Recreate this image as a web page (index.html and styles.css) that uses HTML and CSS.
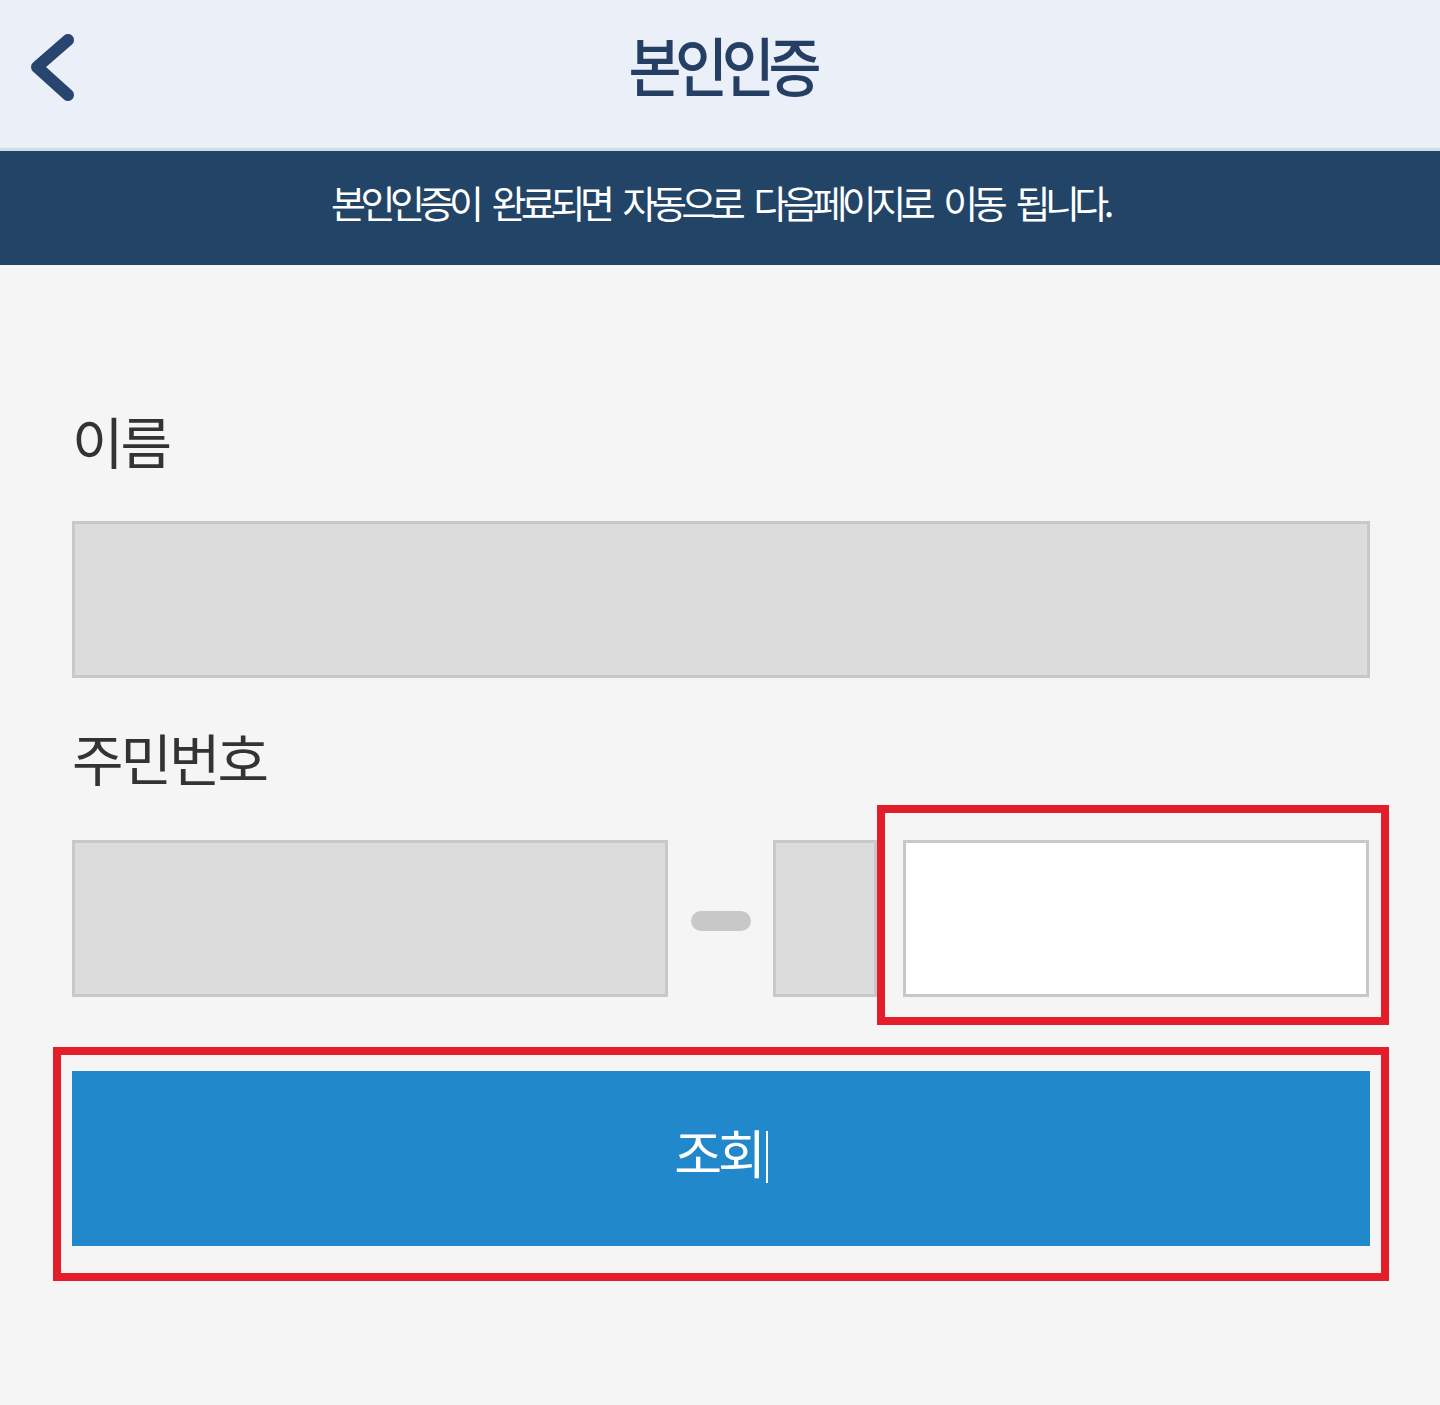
FILE: index.html
```html
<!DOCTYPE html>
<html lang="ko">
<head>
<meta charset="utf-8">
<title>본인인증</title>
<link rel="stylesheet" href="styles.css">
</head>
<body>
<header class="topbar">
  <svg class="back" width="100" height="148" viewBox="0 0 100 148" aria-hidden="true">
    <path d="M68 40 L37 67 L68 95" fill="none" stroke="#284570" stroke-width="12" stroke-linecap="round" stroke-linejoin="round"/>
  </svg>
  <h1 class="title">본인인증</h1>
</header>
<div class="banner"><span class="banner-text">본인인증이 완료되면 자동으로 다음페이지로 이동 됩니다.</span></div>
<main class="main">
  <div class="label">이름</div>
  <div class="field field-wide"></div>
  <div class="label label-2">주민번호</div>
  <div class="id-row">
    <div class="field field-front"></div>
    <div class="dash-wrap"><span class="dash"></span></div>
    <div class="field field-back"></div>
    <div class="field field-white"></div>
    <div class="highlight highlight-input"></div>
  </div>
  <div class="btn-wrap">
    <button class="btn"><span class="btn-text">조회</span><span class="caret"></span></button>
    <div class="highlight highlight-btn"></div>
  </div>
</main>
</body>
</html>
```
FILE: styles.css
```css
html, body {
  margin: 0;
  padding: 0;
}
body {
  width: 1440px;
  height: 1405px;
  background: #f5f5f5;
  font-family: "Noto Sans CJK KR", "Noto Sans", sans-serif;
  overflow: hidden;
}
.topbar {
  position: relative;
  height: 148px;
  background: #ebf0f8;
  border-bottom: 3px solid #d3dce6;
  display: flex;
  align-items: center;
  justify-content: center;
}
.back {
  position: absolute;
  left: 0;
  top: 0;
}
.title {
  margin: 0;
  font-size: 64px;
  font-weight: 500;
  color: #243f63;
  letter-spacing: -7px;
  line-height: 1;
  margin-top: -22px;
  margin-left: 4px;
  transform: scaleX(0.9);
}
.banner {
  height: 114px;
  background: #224466;
  display: flex;
  align-items: center;
  justify-content: center;
}
.banner-text {
  color: #ffffff;
  font-size: 38px;
  letter-spacing: -5.5px;
  word-spacing: 8px;
  line-height: 1;
  margin-top: -12px;
  margin-right: 0;
}
.main {
  padding: 144px 70px 0 72px;
}
.label {
  font-size: 56px;
  line-height: 62px;
  height: 62px;
  color: #333333;
  margin-bottom: 50px;
  letter-spacing: -3px;
}
.label-2 {
  margin-bottom: 52px;
}
.field {
  box-sizing: border-box;
  height: 157px;
  background: #dcdcdc;
  border: 3px solid #c8c8c8;
}
.field-wide {
  width: 1298px;
  margin-bottom: 48px;
}
.id-row {
  position: relative;
  display: flex;
  align-items: center;
  height: 157px;
  margin-bottom: 74px;
}
.field-front {
  width: 596px;
}
.dash-wrap {
  width: 105px;
  display: flex;
  justify-content: center;
}
.dash {
  display: block;
  width: 60px;
  height: 20px;
  border-radius: 10px;
  background: #c8c8c8;
  margin-top: 4px;
}
.field-back {
  width: 104px;
}
.field-white {
  width: 466px;
  margin-left: 26px;
  background: #ffffff;
}
.highlight {
  position: absolute;
  box-sizing: border-box;
  border: 8px solid #e31e2a;
  pointer-events: none;
}
.highlight-input {
  left: 805px;
  top: -35px;
  width: 512px;
  height: 220px;
}
.btn-wrap {
  position: relative;
}
.btn {
  display: flex;
  align-items: center;
  justify-content: center;
  width: 1298px;
  height: 175px;
  border: 0;
  padding: 0;
  background: #2288cc;
  color: #ffffff;
  font-family: "Noto Sans CJK KR", "Noto Sans", sans-serif;
  font-size: 52px;
  line-height: 1;
}
.btn-text {
  letter-spacing: -4px;
  margin-top: -14px;
}
.caret {
  display: inline-block;
  width: 2px;
  height: 52px;
  background: #ffffff;
  margin-left: 4px;
  margin-top: -4px;
}
.highlight-btn {
  left: -19px;
  top: -24px;
  width: 1336px;
  height: 234px;
}
```
